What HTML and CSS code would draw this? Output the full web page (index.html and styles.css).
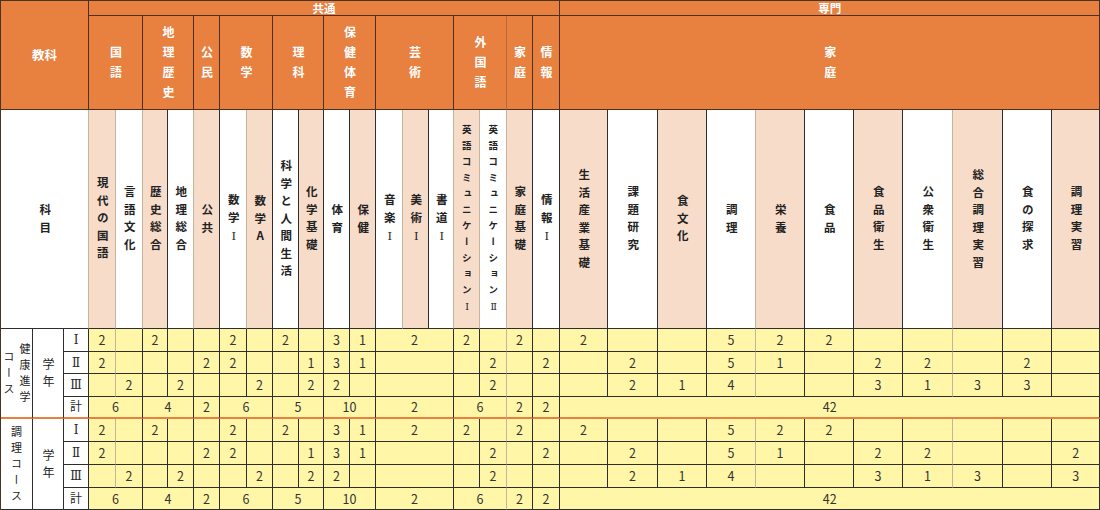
FILE: index.html
```html
<!DOCTYPE html>
<html lang="ja">
<head>
<meta charset="utf-8">
<title>教育課程表</title>
<link rel="stylesheet" href="styles.css">
</head>
<body>
<table class="curriculum">
  <colgroup>
    <col class="w32"><col class="w31"><col class="w25">
    <col class="w27"><col class="w27"><col class="w25"><col class="w26"><col class="w26"><col class="w27"><col class="w26"><col class="w26"><col class="w25"><col class="w26"><col class="w26"><col class="w27"><col class="w26"><col class="w25"><col class="w26"><col class="w27"><col class="w26"><col class="w27">
    <col class="w48"><col class="w50"><col class="w49"><col class="w49"><col class="w49"><col class="w49"><col class="w49"><col class="w50"><col class="w50"><col class="w49"><col class="w48">
  </colgroup>
  <tbody>
    <tr class="r1">
      <td class="hd corner" colspan="3" rowspan="2">教科</td>
      <td class="hd top" colspan="18">共通</td>
      <td class="hd top" colspan="11">専門</td>
    </tr>
    <tr class="r2">
      <td class="hd" colspan="2"><span class="v vh">国語</span></td>
      <td class="hd" colspan="2"><span class="v vh">地理歴史</span></td>
      <td class="hd"><span class="v vh">公民</span></td>
      <td class="hd" colspan="2"><span class="v vh">数学</span></td>
      <td class="hd" colspan="2"><span class="v vh">理科</span></td>
      <td class="hd" colspan="2"><span class="v vh">保健体育</span></td>
      <td class="hd" colspan="3"><span class="v vh">芸術</span></td>
      <td class="hd soft" colspan="2"><span class="v vh">外国語</span></td>
      <td class="hd"><span class="v vh">家庭</span></td>
      <td class="hd"><span class="v vh">情報</span></td>
      <td class="hd" colspan="11"><span class="v vh">家庭</span></td>
    </tr>
    <tr class="r3">
      <td class="w g" colspan="3"><span class="v vs">科目</span></td>
      <td class="p g"><span class="v vs">現代の国語</span></td>
      <td class="w g"><span class="v vs">言語文化</span></td>
      <td class="p"><span class="v vs">歴史総合</span></td>
      <td class="w g"><span class="v vs">地理総合</span></td>
      <td class="p"><span class="v vs">公共</span></td>
      <td class="w g"><span class="v vs">数学<span class="rm">Ⅰ</span></span></td>
      <td class="p"><span class="v vs">数学A</span></td>
      <td class="w"><span class="v vs">科学と人間生活</span></td>
      <td class="p"><span class="v vs">化学基礎</span></td>
      <td class="w"><span class="v vs">体育</span></td>
      <td class="p"><span class="v vs">保健</span></td>
      <td class="w g"><span class="v vs">音楽<span class="rm">Ⅰ</span></span></td>
      <td class="p"><span class="v vs">美術<span class="rm">Ⅰ</span></span></td>
      <td class="w g"><span class="v vs">書道<span class="rm">Ⅰ</span></span></td>
      <td class="p g"><span class="v ve">英語コミュニケーション<span class="rm">Ⅰ</span></span></td>
      <td class="w g"><span class="v ve">英語コミュニケーション<span class="rm">Ⅱ</span></span></td>
      <td class="p"><span class="v vs">家庭基礎</span></td>
      <td class="w"><span class="v vs">情報<span class="rm">Ⅰ</span></span></td>
      <td class="p"><span class="v vs">生活産業基礎</span></td>
      <td class="w"><span class="v vs">課題研究</span></td>
      <td class="p"><span class="v vs">食文化</span></td>
      <td class="w g"><span class="v vs">調理</span></td>
      <td class="p"><span class="v vs">栄養</span></td>
      <td class="w"><span class="v vs">食品</span></td>
      <td class="p"><span class="v vs">食品衛生</span></td>
      <td class="w g"><span class="v vs">公衆衛生</span></td>
      <td class="p"><span class="v vs">総合調理実習</span></td>
      <td class="w"><span class="v vs">食の探求</span></td>
      <td class="p"><span class="v vs">調理実習</span></td>
    </tr>

    <!-- 健康進学コース -->
    <tr class="ra">
      <td class="lb sep" rowspan="4"><span class="v course">健康進学<br>コース</span></td>
      <td class="lb sep" rowspan="4"><span class="v yr">学年</span></td>
      <td class="lb rn">Ⅰ</td>
      <td class="y g">2</td><td class="y"></td><td class="y">2</td><td class="y"></td><td class="y"></td><td class="y">2</td><td class="y"></td><td class="y">2</td><td class="y"></td><td class="y">3</td><td class="y">1</td>
      <td class="y" colspan="3">2</td>
      <td class="y">2</td><td class="y g"></td><td class="y">2</td><td class="y"></td>
      <td class="y">2</td><td class="y"></td><td class="y"></td><td class="y g">5</td><td class="y">2</td><td class="y">2</td><td class="y"></td><td class="y g"></td><td class="y"></td><td class="y"></td><td class="y"></td>
    </tr>
    <tr class="rb">
      <td class="lb rn">Ⅱ</td>
      <td class="y g">2</td><td class="y"></td><td class="y"></td><td class="y"></td><td class="y">2</td><td class="y">2</td><td class="y"></td><td class="y"></td><td class="y">1</td><td class="y">3</td><td class="y">1</td>
      <td class="y" colspan="3"></td>
      <td class="y"></td><td class="y g">2</td><td class="y"></td><td class="y">2</td>
      <td class="y"></td><td class="y">2</td><td class="y"></td><td class="y g">5</td><td class="y">1</td><td class="y"></td><td class="y">2</td><td class="y g">2</td><td class="y"></td><td class="y">2</td><td class="y"></td>
    </tr>
    <tr class="ra">
      <td class="lb rn">Ⅲ</td>
      <td class="y g"></td><td class="y">2</td><td class="y"></td><td class="y">2</td><td class="y"></td><td class="y"></td><td class="y">2</td><td class="y"></td><td class="y">2</td><td class="y">2</td><td class="y"></td>
      <td class="y" colspan="3"></td>
      <td class="y"></td><td class="y g">2</td><td class="y"></td><td class="y"></td>
      <td class="y"></td><td class="y">2</td><td class="y">1</td><td class="y g">4</td><td class="y"></td><td class="y"></td><td class="y">3</td><td class="y g">1</td><td class="y">3</td><td class="y">3</td><td class="y"></td>
    </tr>
    <tr class="rb">
      <td class="lb rn sep">計</td>
      <td class="y sep" colspan="2">6</td><td class="y sep" colspan="2">4</td><td class="y sep">2</td><td class="y sep" colspan="2">6</td><td class="y sep" colspan="2">5</td><td class="y sep" colspan="2">10</td>
      <td class="y sep" colspan="3">2</td>
      <td class="y sep g" colspan="2">6</td><td class="y sep">2</td><td class="y sep">2</td>
      <td class="y sep" colspan="11">42</td>
    </tr>

    <!-- 調理コース -->
    <tr class="ra">
      <td class="lb" rowspan="4"><span class="v course">調理コース</span></td>
      <td class="lb" rowspan="4"><span class="v yr">学年</span></td>
      <td class="lb rn">Ⅰ</td>
      <td class="y g">2</td><td class="y"></td><td class="y">2</td><td class="y"></td><td class="y"></td><td class="y">2</td><td class="y"></td><td class="y">2</td><td class="y"></td><td class="y">3</td><td class="y">1</td>
      <td class="y" colspan="3">2</td>
      <td class="y">2</td><td class="y g"></td><td class="y">2</td><td class="y"></td>
      <td class="y">2</td><td class="y"></td><td class="y"></td><td class="y g">5</td><td class="y">2</td><td class="y">2</td><td class="y"></td><td class="y g"></td><td class="y"></td><td class="y"></td><td class="y"></td>
    </tr>
    <tr class="ra">
      <td class="lb rn">Ⅱ</td>
      <td class="y g">2</td><td class="y"></td><td class="y"></td><td class="y"></td><td class="y">2</td><td class="y">2</td><td class="y"></td><td class="y"></td><td class="y">1</td><td class="y">3</td><td class="y">1</td>
      <td class="y" colspan="3"></td>
      <td class="y"></td><td class="y g">2</td><td class="y"></td><td class="y">2</td>
      <td class="y"></td><td class="y">2</td><td class="y"></td><td class="y g">5</td><td class="y">1</td><td class="y"></td><td class="y">2</td><td class="y g">2</td><td class="y"></td><td class="y"></td><td class="y">2</td>
    </tr>
    <tr class="ra">
      <td class="lb rn">Ⅲ</td>
      <td class="y g"></td><td class="y">2</td><td class="y"></td><td class="y">2</td><td class="y"></td><td class="y"></td><td class="y">2</td><td class="y"></td><td class="y">2</td><td class="y">2</td><td class="y"></td>
      <td class="y" colspan="3"></td>
      <td class="y"></td><td class="y g">2</td><td class="y"></td><td class="y"></td>
      <td class="y"></td><td class="y">2</td><td class="y">1</td><td class="y g">4</td><td class="y"></td><td class="y"></td><td class="y">3</td><td class="y g">1</td><td class="y">3</td><td class="y"></td><td class="y">3</td>
    </tr>
    <tr class="rb">
      <td class="lb rn">計</td>
      <td class="y" colspan="2">6</td><td class="y" colspan="2">4</td><td class="y">2</td><td class="y" colspan="2">6</td><td class="y" colspan="2">5</td><td class="y" colspan="2">10</td>
      <td class="y" colspan="3">2</td>
      <td class="y g" colspan="2">6</td><td class="y">2</td><td class="y">2</td>
      <td class="y" colspan="11">42</td>
    </tr>
  </tbody>
</table>
</body>
</html>
```

FILE: styles.css
```css
html, body {
  margin: 0;
  padding: 0;
  background: #ffffff;
}

body {
  font-family: "Noto Sans CJK JP", "Noto Sans", sans-serif;
  color: #2a2a2a;
}

.curriculum {
  border-collapse: separate;
  border-spacing: 0;
  table-layout: fixed;
  width: 1100px;
  border-top: 1px solid #4a3322;
  border-left: 1px solid #4a3322;
}

.curriculum td {
  padding: 0;
  border-right: 1px solid #2e2e2e;
  border-bottom: 1px solid #2e2e2e;
  text-align: center;
  vertical-align: middle;
  font-size: 12.5px;
  line-height: 14px;
}

/* column widths */
.w25 { width: 25px; }
.w26 { width: 26px; }
.w27 { width: 27px; }
.w31 { width: 31px; }
.w32 { width: 32px; }
.w48 { width: 48px; }
.w49 { width: 49px; }
.w50 { width: 50px; }

/* row heights */
.r1 { height: 15px; }
.r2 { height: 94px; }
.r3 { height: 219px; }
.ra { height: 23px; }
.rb { height: 22px; }

/* header */
.curriculum td.hd {
  background: #e8803f;
  color: #ffffff;
  font-weight: 700;
  border-right-color: #4e3020;
  border-bottom-color: #4e3020;
}

.curriculum td.top {
  font-size: 11.5px;
  line-height: 14px;
}

.curriculum td.corner {
  font-size: 12.5px;
}

.curriculum td.soft {
  border-right-color: #b9683a;
}

/* subject row */
.curriculum td.p {
  background: #f8dcca;
}

.curriculum td.w {
  background: #ffffff;
}

.curriculum td.g {
  border-right-color: #c4b49c;
}

/* vertical labels */
.v {
  display: inline-block;
  writing-mode: vertical-rl;
  text-orientation: upright;
  line-height: 1;
  font-weight: 700;
  color: #222;
}

.hd .v {
  color: #ffffff;
}

.vh {
  font-size: 12px;
  letter-spacing: 8px;
  padding-top: 8px;
}

.vs {
  font-size: 11.5px;
  letter-spacing: 6px;
  padding-top: 6px;
}

.ve {
  font-size: 9.5px;
  letter-spacing: 6.5px;
  padding-top: 6.5px;
}

.rm {
  font-family: "DejaVu Serif", "Liberation Serif", serif;
  font-weight: 400;
}

/* body */
.curriculum td.lb {
  background: #ffffff;
  color: #2a2a2a;
}

.curriculum td.rn {
  font-size: 12px;
  font-family: "DejaVu Serif", "Liberation Serif", "Noto Sans CJK JP", serif;
}

.course {
  font-size: 11px;
  font-weight: 400;
  line-height: 16px;
  letter-spacing: 5px;
  padding-top: 5px;
  text-align: center;
}

.yr {
  font-size: 12px;
  font-weight: 400;
  letter-spacing: 5px;
  padding-top: 5px;
}

.curriculum td.y {
  background: #fff6a8;
  color: #333333;
  font-size: 12.5px;
}

.curriculum td.sep {
  border-bottom: 2px solid #e8803f;
}
```
